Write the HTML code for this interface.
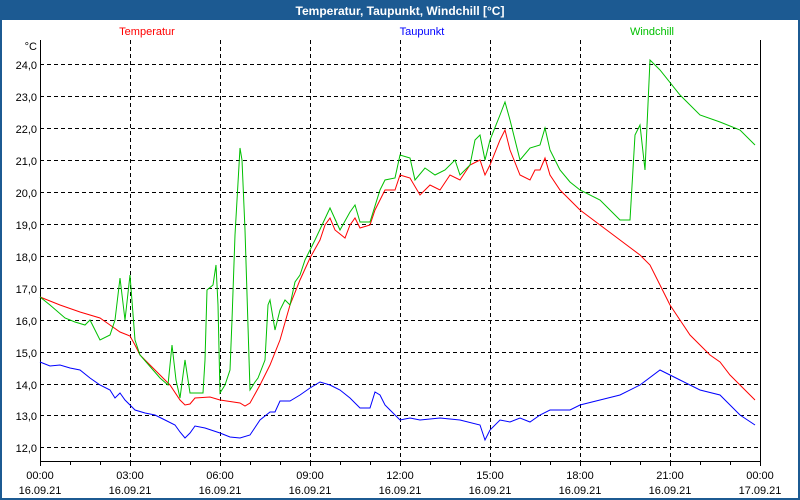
<!DOCTYPE html>
<html><head><meta charset="utf-8"><style>
html,body{margin:0;padding:0;width:800px;height:500px;overflow:hidden;background:#1c5a92;}
svg{display:block}
text{font-family:"Liberation Sans",sans-serif;font-size:11px;fill:#000}
</style></head><body>
<svg width="800" height="500" xmlns="http://www.w3.org/2000/svg">
<rect x="0" y="0" width="800" height="500" fill="#1c5a92"/>
<rect x="2" y="20" width="796" height="478" fill="#fff"/>
<text x="400" y="15" text-anchor="middle" style="fill:#fff;font-weight:bold;font-size:12px">Temperatur, Taupunkt, Windchill [°C]</text>
<text x="147" y="35" text-anchor="middle" style="fill:#ff0000">Temperatur</text>
<text x="422" y="35" text-anchor="middle" style="fill:#0000ff">Taupunkt</text>
<text x="652" y="35" text-anchor="middle" style="fill:#00c000">Windchill</text>
<text x="37" y="50" text-anchor="end">°C</text>
<g stroke="#000" stroke-width="1" stroke-dasharray="4,3" shape-rendering="crispEdges">
<line x1="40" y1="64.5" x2="760" y2="64.5"/><line x1="40" y1="96.5" x2="760" y2="96.5"/><line x1="40" y1="128.5" x2="760" y2="128.5"/><line x1="40" y1="160.5" x2="760" y2="160.5"/><line x1="40" y1="192.5" x2="760" y2="192.5"/><line x1="40" y1="224.5" x2="760" y2="224.5"/><line x1="40" y1="256.5" x2="760" y2="256.5"/><line x1="40" y1="288.5" x2="760" y2="288.5"/><line x1="40" y1="320.5" x2="760" y2="320.5"/><line x1="40" y1="352.5" x2="760" y2="352.5"/><line x1="40" y1="384.5" x2="760" y2="384.5"/><line x1="40" y1="415.5" x2="760" y2="415.5"/><line x1="40" y1="447.5" x2="760" y2="447.5"/>
<line x1="130.5" y1="40" x2="130.5" y2="461"/><line x1="220.5" y1="40" x2="220.5" y2="461"/><line x1="310.5" y1="40" x2="310.5" y2="461"/><line x1="400.5" y1="40" x2="400.5" y2="461"/><line x1="490.5" y1="40" x2="490.5" y2="461"/><line x1="580.5" y1="40" x2="580.5" y2="461"/><line x1="670.5" y1="40" x2="670.5" y2="461"/>
</g>
<g stroke="#000" stroke-width="1" shape-rendering="crispEdges">
<polyline points="40.5,40 40.5,461.5 760.5,461.5 760.5,40" fill="none"/>
<path d="M40.5,461v5M70.5,461v4M100.5,461v4M130.5,461v5M160.5,461v4M190.5,461v4M220.5,461v5M250.5,461v4M280.5,461v4M310.5,461v5M340.5,461v4M370.5,461v4M400.5,461v5M430.5,461v4M460.5,461v4M490.5,461v5M520.5,461v4M550.5,461v4M580.5,461v5M610.5,461v4M640.5,461v4M670.5,461v5M700.5,461v4M730.5,461v4M760.5,461v5"/>
</g>
<g text-anchor="end">
<text x="37" y="69">24,0</text><text x="37" y="101">23,0</text><text x="37" y="133">22,0</text><text x="37" y="165">21,0</text><text x="37" y="197">20,0</text><text x="37" y="229">19,0</text><text x="37" y="261">18,0</text><text x="37" y="293">17,0</text><text x="37" y="325">16,0</text><text x="37" y="357">15,0</text><text x="37" y="389">14,0</text><text x="37" y="420">13,0</text><text x="37" y="452">12,0</text>
</g>
<g text-anchor="middle">
<text x="40" y="479">00:00</text><text x="40" y="494">16.09.21</text>
<text x="130" y="479">03:00</text><text x="130" y="494">16.09.21</text>
<text x="220" y="479">06:00</text><text x="220" y="494">16.09.21</text>
<text x="310" y="479">09:00</text><text x="310" y="494">16.09.21</text>
<text x="400" y="479">12:00</text><text x="400" y="494">16.09.21</text>
<text x="490" y="479">15:00</text><text x="490" y="494">16.09.21</text>
<text x="580" y="479">18:00</text><text x="580" y="494">16.09.21</text>
<text x="670" y="479">21:00</text><text x="670" y="494">16.09.21</text>
<text x="760" y="479">00:00</text><text x="760" y="494">17.09.21</text>
</g>
<g fill="none" stroke-width="1">
<polyline stroke="#0000ff" points="40,362 50,366 60,365 70,368 80,370 90,378 100,385 110,390 115,398 120,393 125,400 135,410 145,413 155,415 165,420 175,425 180,432 185,438 190,433 195,426 205,428 220,433 230,437 240,438 250,435 260,420 270,412 275,412 280,401 290,401 300,395 310,388 320,382 330,385 340,390 350,398 360,408 370,408 375,392 380,395 385,405 390,410 400,420 410,418 420,420 440,418 460,420 480,425 485,440 490,430 500,420 510,422 520,418 530,422 540,415 550,410 560,410 570,410 580,405 600,400 620,395 640,385 660,370 670,375 680,380 700,390 720,395 740,415 755,425"/>
<polyline stroke="#ff0000" points="40,297 60,305 80,312 100,318 110,325 120,332 130,336 135,345 140,355 150,365 160,375 170,385 180,400 185,405 190,404 195,398 210,397 220,400 240,403 245,406 250,403 260,385 270,365 280,340 290,305 300,280 310,258 320,240 325,225 330,218 335,230 345,238 350,225 355,218 360,228 370,225 375,210 385,190 395,190 400,175 410,178 420,195 425,190 430,185 440,190 450,175 460,180 470,165 480,160 485,175 490,165 500,140 505,130 510,150 520,175 530,180 535,170 540,170 545,158 550,175 560,190 570,200 580,210 600,225 620,240 640,255 650,265 660,285 670,305 680,320 690,335 700,345 710,355 720,362 730,375 740,385 750,395 755,400"/>
<polyline stroke="#00c000" points="40,297 50,305 65,318 75,322 85,325 90,320 100,340 110,335 115,320 120,278 125,320 130,275 135,340 140,355 160,378 168,385 172,345 176,380 180,398 185,360 190,393 203,393 205,360 207,290 213,285 216,265 218,305 220,393 225,385 230,370 232,320 235,235 240,148 242,160 245,230 250,390 255,382 258,378 265,360 268,305 270,300 275,330 280,310 285,300 290,305 295,282 300,275 305,260 315,240 330,208 340,230 350,212 355,205 360,222 370,222 380,190 385,180 395,178 400,155 410,158 415,180 425,168 435,175 445,170 455,160 460,175 470,165 475,140 480,135 485,160 490,140 500,115 505,102 510,120 520,160 530,148 540,145 545,128 550,150 560,170 570,182 580,190 600,200 620,220 630,220 635,135 640,125 645,170 650,60 660,70 680,95 700,115 720,122 740,130 755,145"/>
</g>
</svg>
</body></html>
